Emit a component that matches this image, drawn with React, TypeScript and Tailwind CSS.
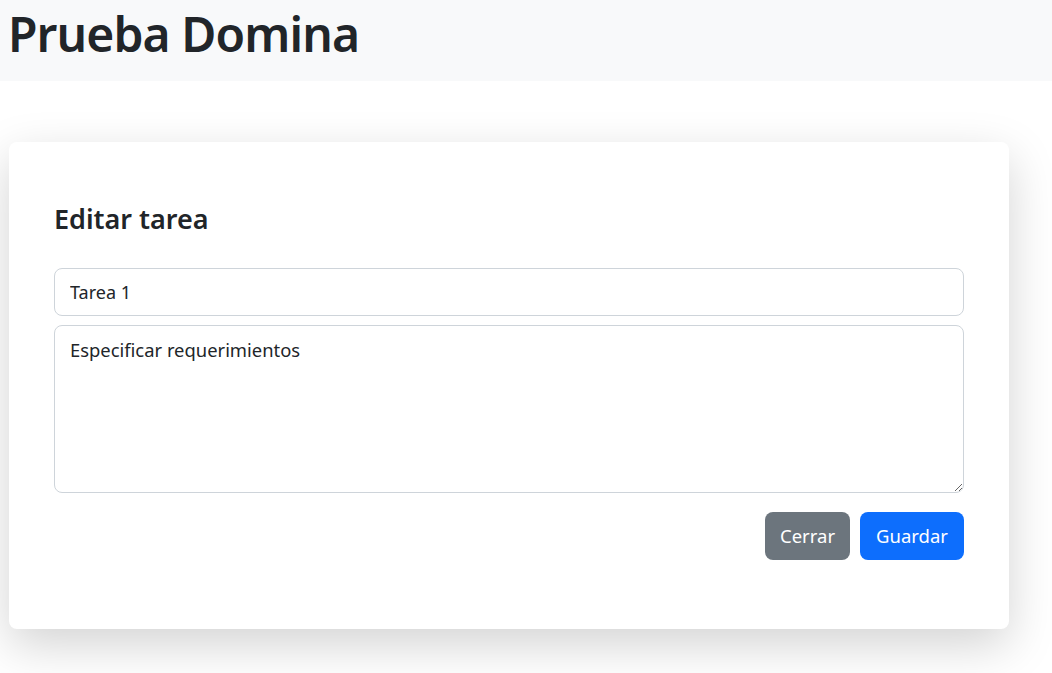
export default function App() {
  const font = { fontFamily: '"Noto Sans", "Open Sans", sans-serif' };
  return (
    <div className="min-h-[673px] bg-white text-[#212529]" style={font}>
      <header className="h-[81px] bg-[#f8f9fa] px-[8px] pt-[3px]">
        <h1 className="text-[48px] font-semibold leading-[62px] tracking-[-0.9px]">Prueba Domina</h1>
      </header>

      <div className="ml-[9px] mt-[61px] w-[1000px] rounded-lg bg-white px-[45px] pt-[60px] pb-[69px] shadow-[0_16px_48px_rgba(0,0,0,0.175)]">
        <h3 className="mb-[33px] text-[27px] font-semibold leading-[33px]">Editar tarea</h3>
        <div className="flex flex-col gap-[9px]">
          <input
            defaultValue="Tarea 1"
            className="h-[48px] w-full rounded-lg border border-[#ced4da] px-[15px] text-[18px] text-[#212529] outline-none"
          />
          <textarea
            defaultValue="Especificar requerimientos"
            className="h-[168px] w-full resize-y rounded-lg border border-[#ced4da] px-[15px] py-[9px] text-[18.4px] leading-[30px] text-[#212529] outline-none"
          />
        </div>
        <div className="mt-[19px] flex justify-end gap-[10px]">
          <button className="h-[48px] rounded-lg bg-[#6c757d] px-[15px] text-[18.5px] text-white">Cerrar</button>
          <button className="h-[48px] rounded-lg bg-[#0d6efd] px-[16px] text-[18.5px] text-white">Guardar</button>
        </div>
      </div>
    </div>
  );
}
